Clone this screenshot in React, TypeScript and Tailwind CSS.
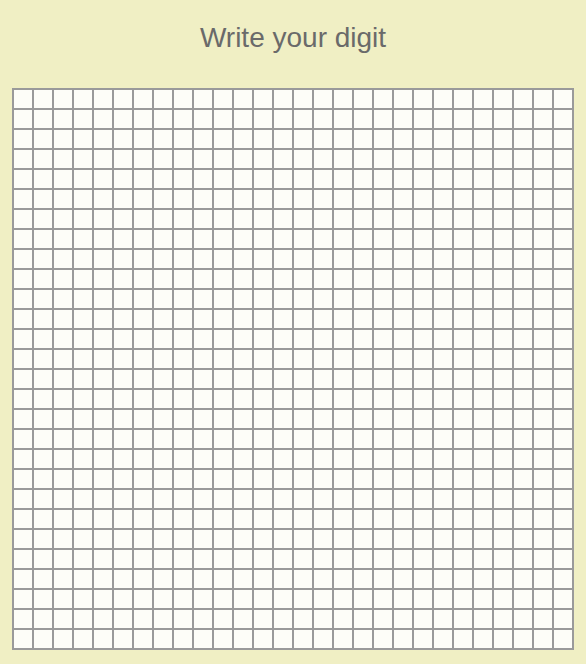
import React from "react";

export default function App() {
  const cells = Array.from({ length: 28 * 28 });
  return (
    <div className="min-h-[664px] w-full bg-[#f0efc4]" style={{ fontFamily: '"Liberation Sans", Arial, sans-serif' }}>
      <div className="pt-[24px] pb-[36px] text-center text-[28px] leading-none text-[#6a6a6a]">
        Write your digit
      </div>
      <div className="ml-[12px] w-[562px] border border-[#9a9a9a] grid grid-cols-28">
        {cells.map((_, i) => (
          <div key={i} className="h-5 w-5 border border-[#9a9a9a] bg-[#fdfdf8]" />
        ))}
      </div>
    </div>
  );
}
